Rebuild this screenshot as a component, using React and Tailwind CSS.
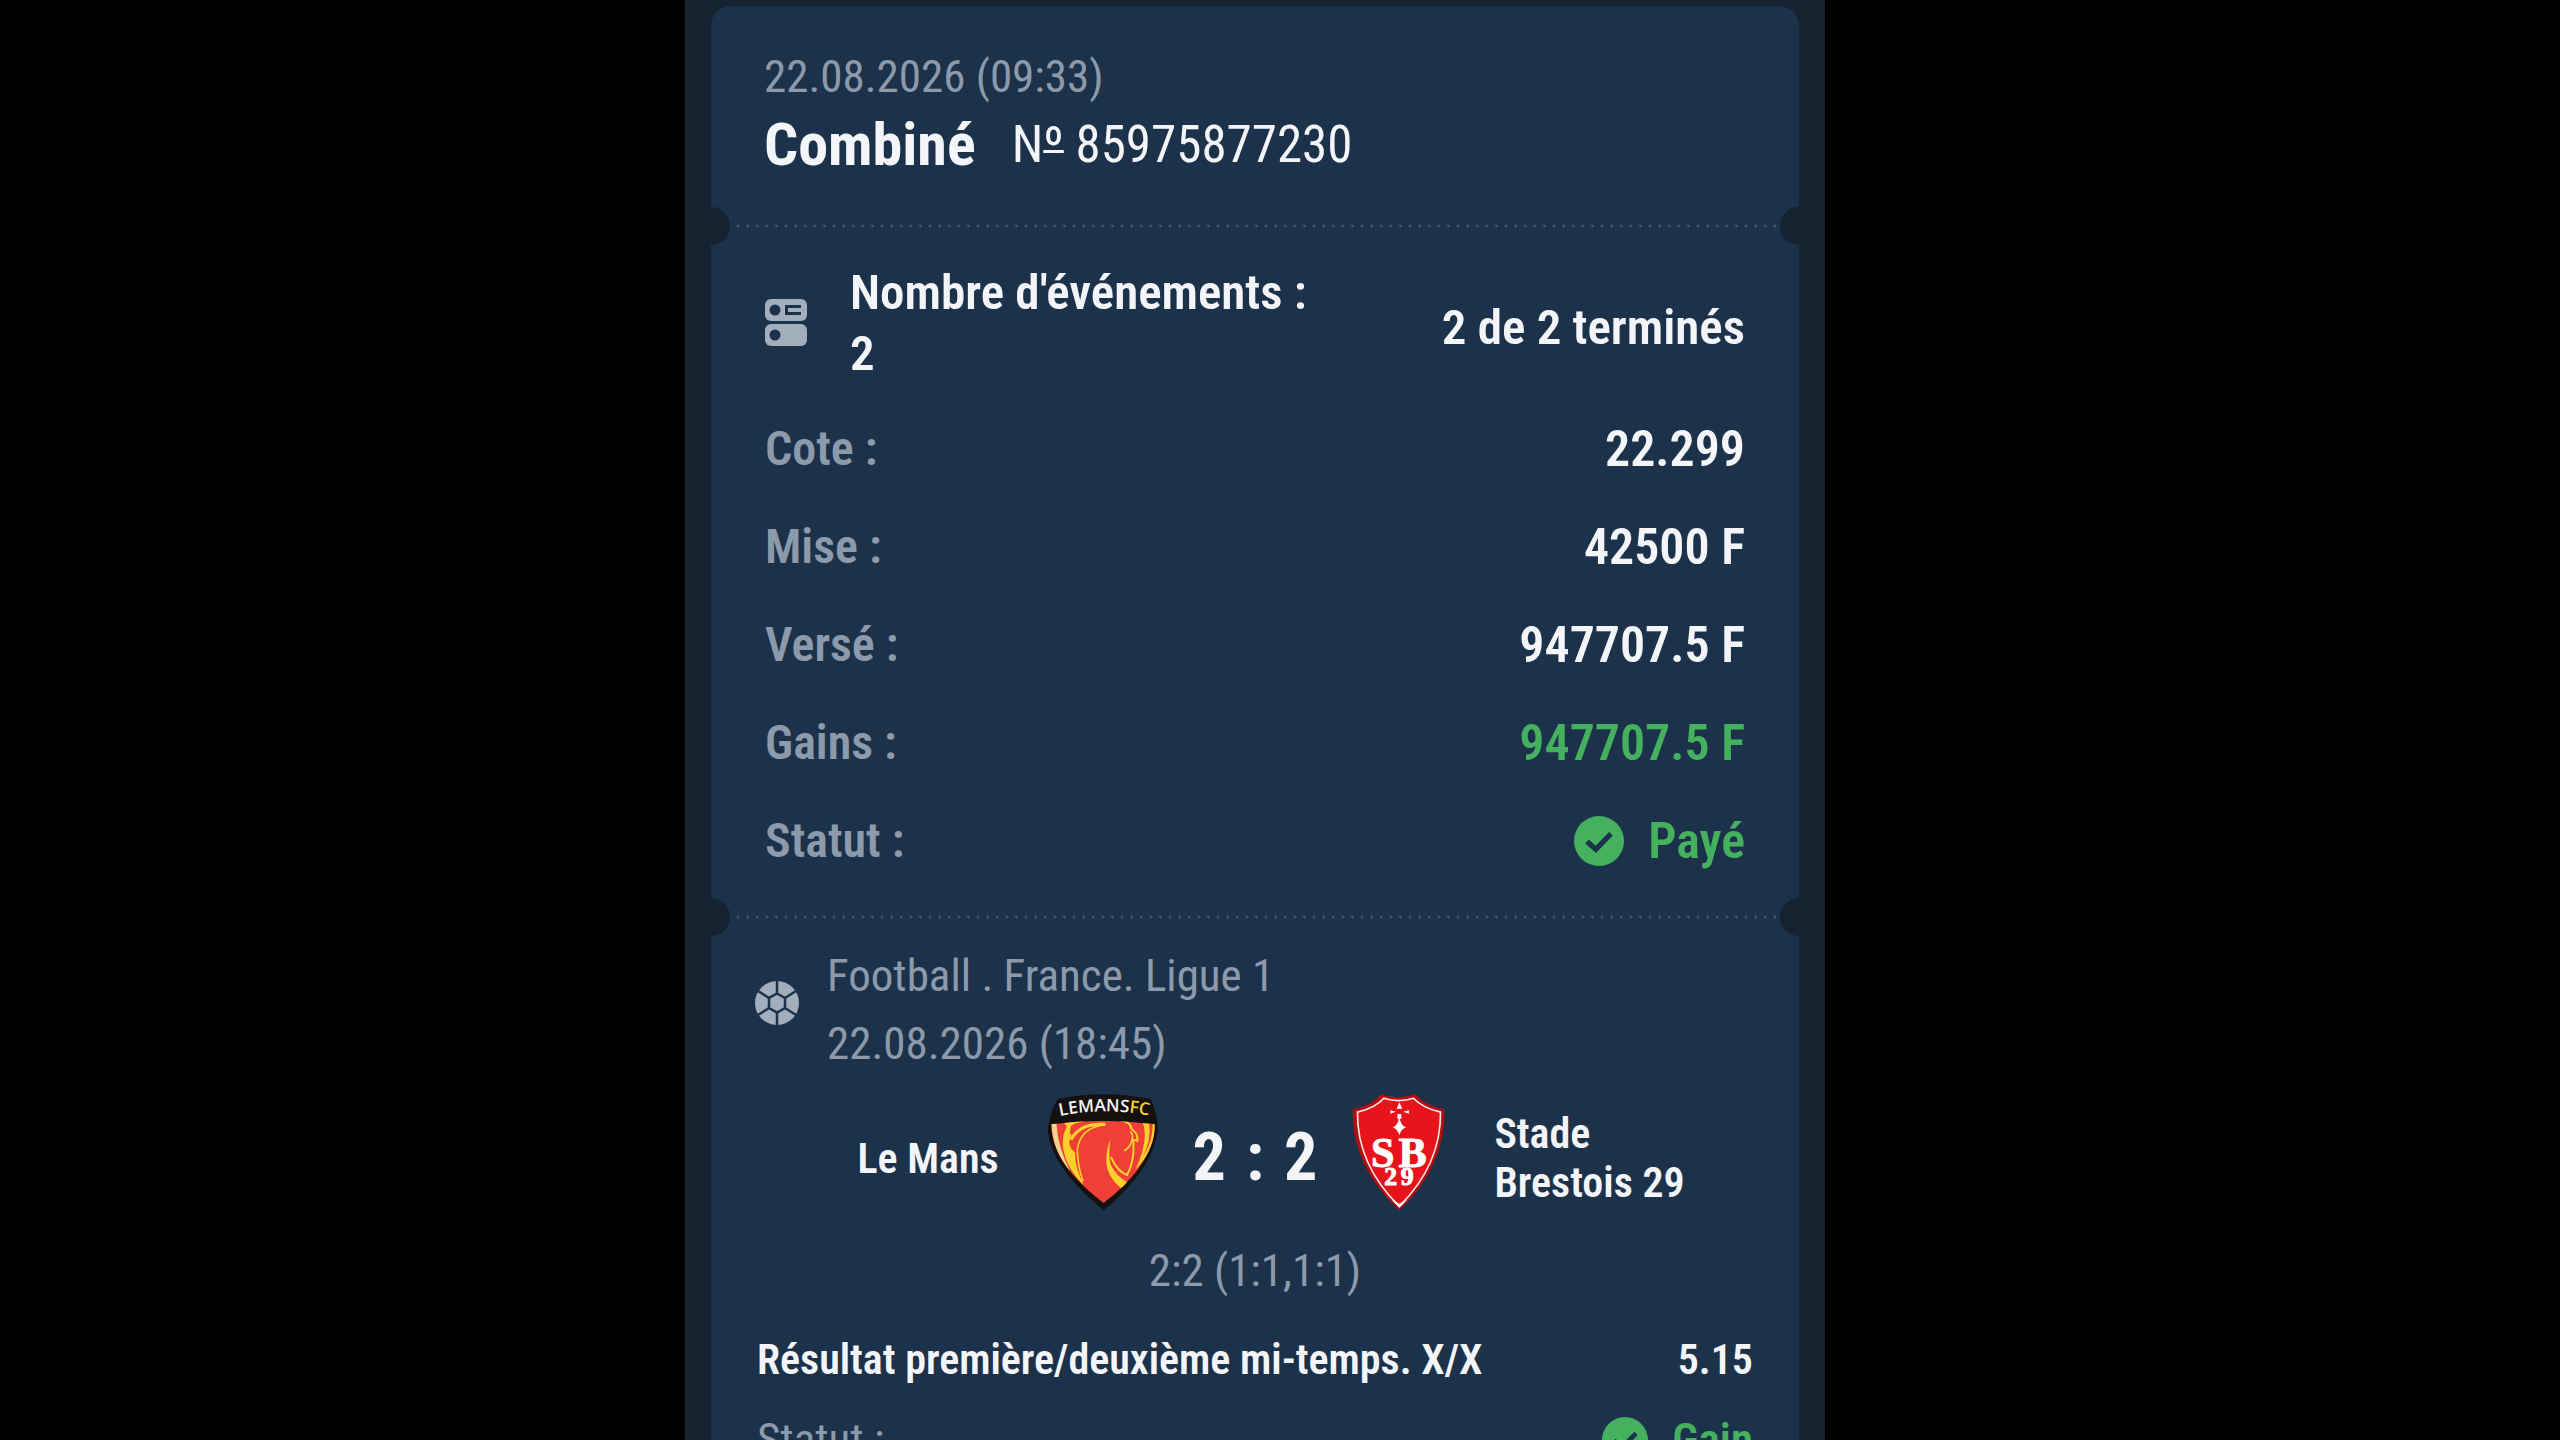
import React from "react";

const SUMMARY = [
  { label: "Cote :", value: "22.299" },
  { label: "Mise :", value: "42500 F" },
  { label: "Versé :", value: "947707.5 F" },
  { label: "Gains :", value: "947707.5 F", won: true },
];

const CheckIcon = ({ className }) => (
  <svg viewBox="0 0 48 48" className={className} aria-hidden="true">
    <circle cx="24" cy="24" r="24" fill="#45b15f" />
    <path d="M12.500 24.500 L21 32 L35.500 17" fill="none" stroke="#1c324a" strokeWidth="5" />
  </svg>
);

const EventsIcon = () => (
  <svg viewBox="0 0 42 48" className="w-[42px] h-12 shrink-0" aria-hidden="true">
    <rect x="0" y="0" width="42" height="22" rx="6" fill="#a3aebd" />
    <rect x="0" y="25" width="42" height="22" rx="6" fill="#a3aebd" />
    <circle cx="10" cy="11" r="5.500" fill="#1c324a" />
    <circle cx="10" cy="36" r="5.500" fill="#1c324a" />
    <path d="M36 7.500 H21.500 V14.500 H36" fill="none" stroke="#1c324a" strokeWidth="3" />
  </svg>
);

const BallIcon = () => (
  <svg viewBox="0 0 44 44" className="w-11 h-11 shrink-0" aria-hidden="true">
    <circle cx="22" cy="22" r="22" fill="#a3aebd" />
    <g fill="none" stroke="#1c324a" strokeWidth="2.500">
      <path d="M22 12.500 L30 17 V27 L22 31.500 L14 27 V17 Z" />
      <path d="M22 0 V12.500 M22 31.500 V44" />
      <path d="M30 17 L41 10 M30 27 L41 34 M14 17 L3 10 M14 27 L3 34" />
    </g>
  </svg>
);

const LeMansCrest = () => (
  <svg viewBox="80 70 336 354" className="w-28 h-[118px] shrink-0" role="img" aria-label="Le Mans">
    <path
      d="M112 88 Q250 60 390 88 Q412 130 412 180 C404 270 330 355 250 422 C168 355 90 270 82 180 Q88 130 112 88 Z"
      fill="#14110f"
    />
    <clipPath id="lemans-inner">
      <path d="M93 164 Q248 142 403 164 C406 250 335 335 250 400 C165 335 92 255 93 164 Z" />
    </clipPath>
    <g clipPath="url(#lemans-inner)">
      <rect x="80" y="140" width="336" height="270" fill="#f03f37" />
      <path d="M93 160 Q98 250 150 305 Q112 235 108 158 Z" fill="#f3d68c" />
      <path d="M130 158 L225 150 Q175 155 152 168 L148 190 L154 196 Q135 225 165 250 Q160 285 190 345 Q140 300 128 235 Q124 195 140 172 Z" fill="#fbd02c" />
      <path d="M152 210 Q180 158 255 164" fill="none" stroke="#fbd02c" strokeWidth="9" />
      <path d="M255 166 Q180 172 171 240 Q172 290 188 335" fill="none" stroke="#fbd02c" strokeWidth="5" />
      <path d="M298 151 Q334 158 333 178 Q354 190 351 214 L338 210 Q345 270 320 316 Q290 305 272 262" fill="none" stroke="#fbd02c" strokeWidth="6" />
      <path d="M270 208 Q250 260 262 300 Q275 335 303 356 L324 340 Q285 318 270 282 Q264 250 270 208 Z" fill="#fbd02c" />
      <path d="M330 185 Q345 200 326 232 L312 244" fill="none" stroke="#fbd02c" strokeWidth="5" />
      <path d="M366 155 Q388 210 345 300 Q405 240 406 158 Z" fill="#fbd02c" />
      <path d="M386 158 Q394 210 368 262 Q398 215 397 160 Z" fill="#f03f37" />
    </g>
    <path id="lemans-arc" d="M118 139 Q250 111 400 140" fill="none" />
    <text fontFamily="'Open Sans', sans-serif" fontSize="52" fontWeight="600" fill="#f4f4f4">
      <textPath href="#lemans-arc">
        LEMANS<tspan fill="#f4d52a">FC</tspan>
      </textPath>
    </text>
  </svg>
);

const BrestCrest = () => (
  <svg viewBox="60 68 285 358" className="w-[95px] h-[118px] shrink-0" role="img" aria-label="Stade Brestois 29">
    <path
      d="M63 118 Q120 108 150 72 Q200 90 254 72 Q285 108 342 118 Q346 290 205 424 Q60 290 63 118 Z"
      fill="#b30d14"
    />
    <path
      d="M78 126 Q132 114 158 84 Q203 98 248 84 Q276 114 330 126 Q332 285 205 412 Q76 285 78 126 Z"
      fill="#e8141c"
      stroke="#ffe9e6"
      strokeWidth="5"
    />
    <path d="M205 96 L214 116 H197 Z M178 120 L194 125 L178 131 Z M234 120 L217 125 L234 131 Z M199 132 H211 V146 H199 Z" fill="#fff" />
    <path d="M205 140 Q209 166 225 173 Q210 178 205 197 Q200 178 185 173 Q201 166 205 140 Z" fill="#fff" />
    <g fontFamily="'Liberation Serif', serif" fill="#fff" stroke="#fff" strokeWidth="3" textAnchor="middle">
      <text x="155" y="292" fontSize="128">S</text>
      <text x="245" y="292" fontSize="128">B</text>
      <text x="179" y="346" fontSize="78">2</text>
      <text x="229" y="348" fontSize="78">9</text>
    </g>
    <path d="M182 392 L205 416 L229 392 L205 404 Z" fill="#fff" />
  </svg>
);

// Perforated edge between two parts of the ticket
const Divider = () => (
  <div className="flex items-center justify-between overflow-hidden h-[38px]">
    <span className="w-[38px] h-[38px] -ml-[19px] rounded-full bg-[#14232f]" />
    <svg className="flex-1 h-1 mx-1" aria-hidden="true">
      <line x1="4" y1="2" x2="100%" y2="2" stroke="#40566d" strokeWidth="3" strokeLinecap="round" strokeDasharray="0.100 9.500" />
    </svg>
    <span className="w-[38px] h-[38px] -mr-[19px] rounded-full bg-[#14232f]" />
  </div>
);

const App = () => {
  return (
    <div className="min-h-screen bg-black flex justify-center pr-[50px] font-['Roboto_Condensed','Roboto',sans-serif]">
      <main className="w-full max-w-[1140px] bg-[#14232f] px-[26px] pt-[6px]">
        <article className="bg-[#1c324a] rounded-t-[20px] text-[#f3f5f9]">
          <header className="px-[53px] pt-[41px] pb-6">
            <p className="text-[45px] leading-[60px] text-[#8c9aab]">22.08.2026 (09:33)</p>
            <div className="flex items-center gap-9 leading-[76px]">
              <h1 className="text-[60px] font-bold">Combiné</h1>
              <span className="text-[51px]">
                N<span className="underline decoration-3 underline-offset-[-12px]">º</span> 85975877230
              </span>
            </div>
          </header>

          <Divider />

          <section className="px-[54px] pt-[17px] pb-[26px] text-[49px] font-semibold">
            <div className="flex items-center justify-between min-h-[132px]">
              <div className="flex items-center self-start gap-[43px] leading-[61px]">
                <EventsIcon />
                <p>
                  Nombre d'événements :<br />2
                </p>
              </div>
              <p>2 de 2 terminés</p>
            </div>
            <dl className="mt-6 flex flex-col gap-9 leading-[62px]">
              {SUMMARY.map((row) => (
                <div key={row.label} className="flex justify-between">
                  <dt className="text-[48px] text-[#8c9aab]">{row.label}</dt>
                  <dd className={row.won ? "text-[50px] text-[#45b15f]" : "text-[50px]"}>{row.value}</dd>
                </div>
              ))}
              <div className="flex justify-between">
                <dt className="text-[48px] text-[#8c9aab]">Statut :</dt>
                <dd className="flex items-center gap-6 text-[50px] text-[#45b15f]">
                  <CheckIcon className="w-[50px] h-[50px]" />
                  Payé
                </dd>
              </div>
            </dl>
          </section>

          <Divider />

          <section className="px-[46px] pt-[6px] pb-12">
            <div className="flex items-start gap-7 -ml-0.5 text-[45px] leading-[68px] text-[#8c9aab]">
              <div className="pt-[39px]">
                <BallIcon />
              </div>
              <div>
                <p>Football . France. Ligue 1</p>
                <p>22.08.2026 (18:45)</p>
              </div>
            </div>

            <div className="grid grid-cols-[1fr_auto_1fr] items-center gap-[34px] min-h-[130px] mt-[15px] text-[42px] leading-[49px] font-semibold">
              <div className="flex items-center justify-end gap-12 h-full">
                <p>Le Mans</p>
                <div className="self-start">
                  <LeMansCrest />
                </div>
              </div>
              <p className="flex gap-5 text-[66px] leading-[76px] font-bold">
                <span>2</span>
                <span>:</span>
                <span>2</span>
              </p>
              <div className="flex items-center gap-12 h-full">
                <div className="self-start">
                  <BrestCrest />
                </div>
                <p className="max-w-[220px]">Stade Brestois 29</p>
              </div>
            </div>

            <p className="mt-[18px] text-center text-[45px] leading-[60px] text-[#8c9aab]">2:2 (1:1,1:1)</p>

            <div className="flex justify-between mt-[29px] text-[42px] leading-[60px] font-semibold">
              <p>Résultat première/deuxième mi-temps. X/X</p>
              <p>5.15</p>
            </div>
            <div className="flex justify-between mt-5 text-[45px] leading-[60px]">
              <p className="text-[#8c9aab]">Statut :</p>
              <p className="flex items-center gap-6 font-semibold text-[#45b15f]">
                <CheckIcon className="w-[46px] h-[46px]" />
                Gain
              </p>
            </div>
          </section>
        </article>
      </main>
    </div>
  );
};

export default App;
